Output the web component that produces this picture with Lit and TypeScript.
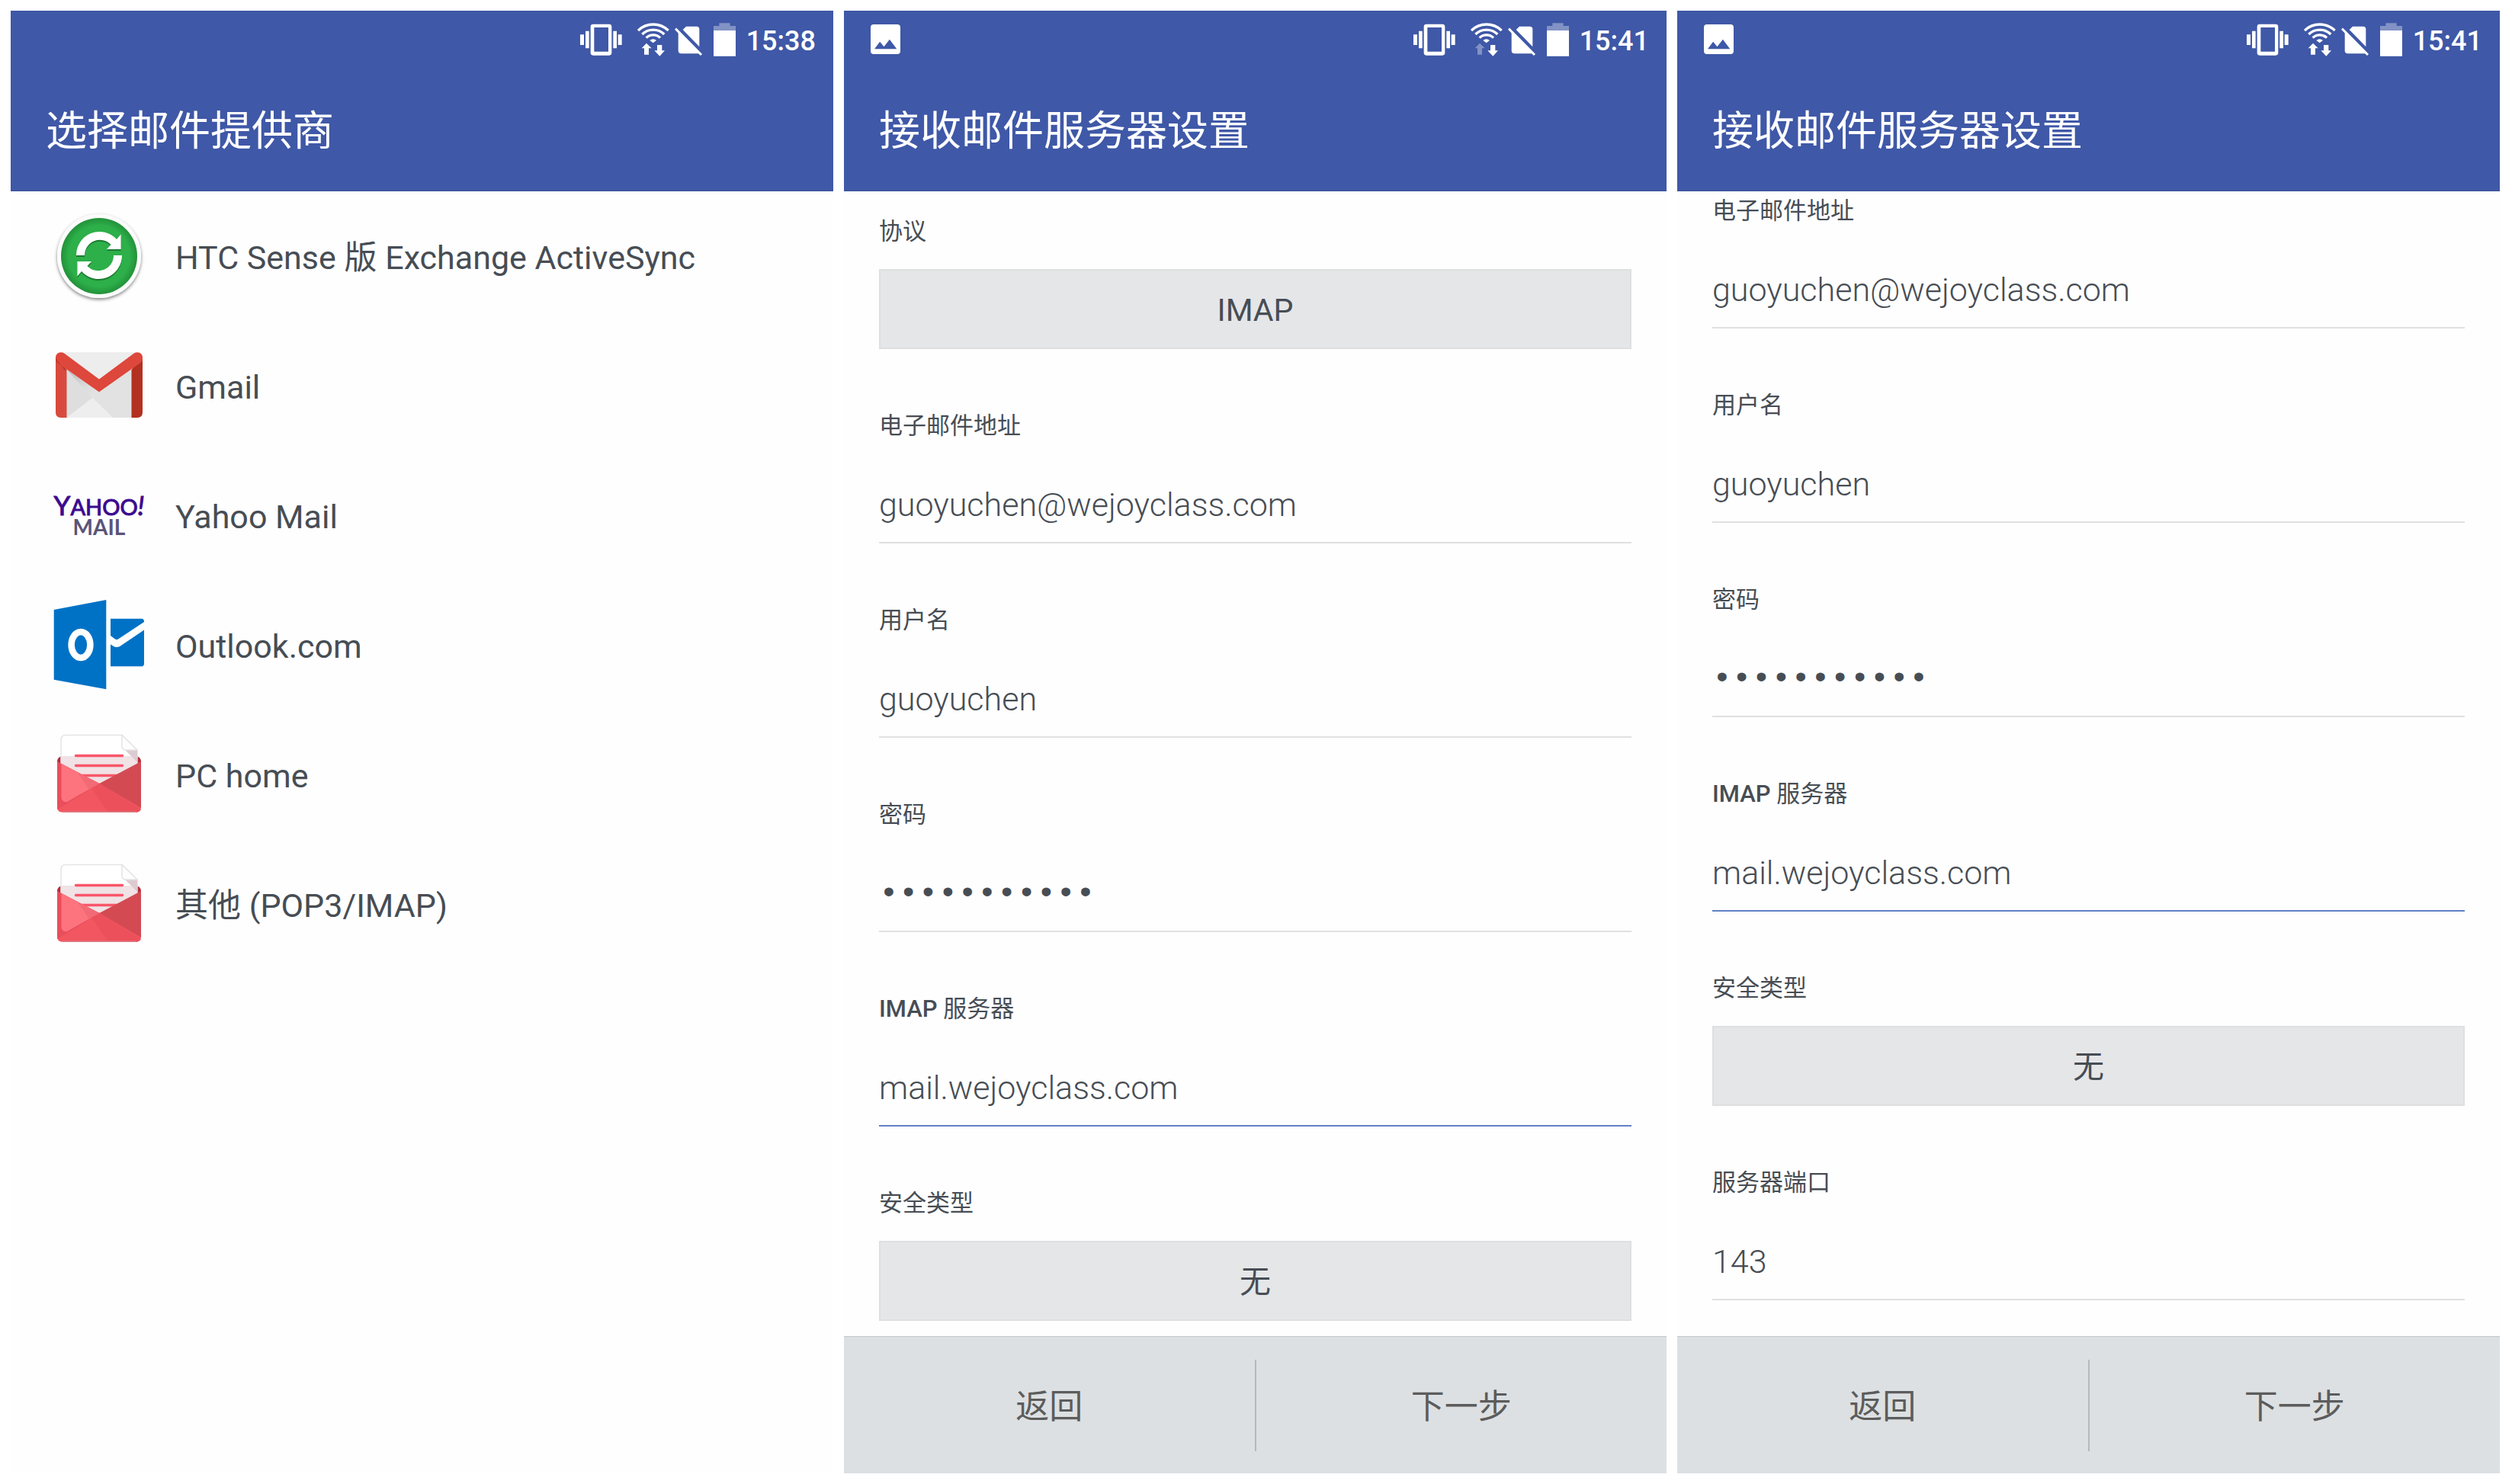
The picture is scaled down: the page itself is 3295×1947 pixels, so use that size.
import { LitElement, html, svg, css, nothing, type TemplateResult } from "lit";
import { customElement, property } from "lit/decorators.js";
import { classMap } from "lit/directives/class-map.js";

type Field =
  | { id: string; kind: "choice"; label: string; value: string }
  | { id: string; kind: "text" | "password"; label: string; value: string; active?: boolean };

interface Provider {
  name: string;
  icon: TemplateResult;
}

/* ---------- provider icons ---------- */

const syncIcon = html`<svg class="icon" viewBox="0 0 120 120" aria-hidden="true">
  <defs>
    <radialGradient id="sync-fill" cx="50%" cy="50%" r="50%">
      <stop offset="0.8" stop-color="#2daf49" />
      <stop offset="1" stop-color="#22913a" />
    </radialGradient>
    <filter id="sync-drop" x="-20%" y="-20%" width="140%" height="140%">
      <feDropShadow dx="0" dy="2" stdDeviation="2" flood-color="#000" flood-opacity="0.5" />
    </filter>
  </defs>
  <circle cx="60" cy="58" r="55" fill="#fbfbfb" filter="url(#sync-drop)" />
  <circle cx="60" cy="58" r="50" fill="url(#sync-fill)" />
  <g fill="#1d7a31" transform="translate(0 2)">
    <path d="M30 57A30.500 31 0 0 1 83 36L88.600 29.500V49H70L75.500 43A20 20 0 0 0 41 57Z" />
    <path transform="rotate(180 60 57)" d="M30 57A30.500 31 0 0 1 83 36L88.600 29.500V49H70L75.500 43A20 20 0 0 0 41 57Z" />
  </g>
  <g fill="#fff">
    <path d="M30 57A30.500 31 0 0 1 83 36L88.600 29.500V49H70L75.500 43A20 20 0 0 0 41 57Z" />
    <path transform="rotate(180 60 57)" d="M30 57A30.500 31 0 0 1 83 36L88.600 29.500V49H70L75.500 43A20 20 0 0 0 41 57Z" />
  </g>
</svg>`;

const gmailIcon = html`<svg class="icon" viewBox="0 0 120 120" aria-hidden="true">
  <defs>
    <linearGradient id="gm-shade" x1="0" y1="0" x2="1" y2="1">
      <stop offset="0" stop-color="#b9b9b9" />
      <stop offset="0.6" stop-color="#dcdcdc" />
      <stop offset="1" stop-color="#e6e6e6" />
    </linearGradient>
  </defs>
  <path d="M10 14.500H110L117 24V93Q117 100 110 100H10Q3 100 3 93V24Z" fill="#e4e4e4" />
  <path d="M14 14.500H106L60 50Z" fill="#ededed" />
  <path d="M17.500 37V100L51.500 73.700Z" fill="#dedede" />
  <path d="M17.500 37L60 66.300L102.500 37V100H78L51.500 73.700Z" fill="#e2e2e2" />
  <path d="M17.500 37L60 66.300L51.500 73.700Z" fill="url(#gm-shade)" />
  <path d="M17.500 100L51.500 73.700L78 100Z" fill="#eee" />
  <path d="M3 21V93Q3 100 10 100H17.500V37Z" fill="#d94a3e" />
  <path d="M117 21V93Q117 100 110 100H102.500V37Z" fill="#b23121" />
  <path d="M3 22Q3 14.300 10 14.300Q13 14.300 15.500 16.500L60 49.500L104.500 16.500Q107 14.300 110 14.300Q117 14.300 117 22Q117 26 113.500 28.500L60 66.300L6 28.500Q3 26 3 22Z" fill="#de473b" />
  <path d="M3 22Q3 26 6 28.500L17.500 37L15 38Z" fill="#b63a2f" />
</svg>`;

const yahooIcon = html`<svg class="icon" viewBox="0 0 120 120" aria-hidden="true">
  <text class="yahoo" x="60" y="58" font-size="35" text-anchor="middle">Y<tspan font-size="29">AHOO</tspan><tspan font-style="italic">!</tspan></text>
  <text class="yahoo-mail" x="60" y="84" font-size="28" text-anchor="middle">MAIL</text>
</svg>`;

const outlookIcon = html`<svg class="icon" viewBox="0 0 120 120" aria-hidden="true">
  <path d="M0.700 12L69.300 -1V116.300L0.700 103.700Z" fill="#0072c6" />
  <ellipse cx="36" cy="58" rx="12.400" ry="17" fill="none" stroke="#fff" stroke-width="8.500" />
  <path d="M75 23.700H117L119 26V28L85 50.500Q83 51.500 81 50.500L75 46Z" fill="#0072c6" />
  <path d="M75 57.500L80 60.500Q84 62 88 59.500L119 38.500V84L117 86.300H75Z" fill="#0072c6" />
</svg>`;

const mailIcon = html`<svg class="icon" viewBox="0 0 120 120" aria-hidden="true">
  <path d="M5 42Q5 34 13 34H107Q115 34 115 42V60H5Z" fill="#b32f3d" />
  <path d="M10 46V13Q10 6.500 16 6.500H90L110 26V46L60 72Z" fill="#fff" stroke="#e6e4e5" stroke-width="1.500" />
  <path d="M10.500 34H110V44L60.500 72L10.500 44Z" fill="#f0e2e5" />
  <path d="M94 26H110V42Z" fill="#dccbd0" />
  <path d="M90 6.500V21Q90 26 96 26H110Z" fill="#fdfdfd" stroke="#e6e4e5" stroke-width="1.500" />
  <g stroke="#f9566a" stroke-width="3.500" stroke-linecap="round">
    <path d="M29.500 33.500H90.500M29.500 46.500H90.500M29.500 59.500H90.500" />
  </g>
  <path d="M5 42L60.500 70L115 42V100.500Q115 107.700 108 107.700H12Q5 107.700 5 100.500Z" fill="#f25660" />
  <path d="M5 41L60.500 70L5 104Z" fill="#e84e5b" />
  <path d="M10.500 44L60.500 70L18 94Q11 95 10.500 88Z" fill="#fd737e" />
  <path d="M32 56L60.500 70L47 78Z" fill="#f26a75" />
  <path d="M60.500 70L115 104Q113 107.700 108 107.700H72L50 76Z" fill="#ec505b" />
  <path d="M115 41L60.500 70L115 102Z" fill="#d34a53" />
  <path d="M12 107.200H108" stroke="#d98088" stroke-width="1.500" />
</svg>`;

/* ---------- status icons ---------- */

const pictureIcon = html`<svg width="39" height="39" viewBox="1205 97 116 116" aria-hidden="true">
  <path fill="#fff" fill-rule="evenodd" d="M1217 97H1309Q1321 97 1321 109V201Q1321 213 1309 213H1217Q1205 213 1205 201V109Q1205 97 1217 97ZM1220 193H1307L1279 156L1257 184L1241 165Z" />
</svg>`;

const vibrateIcon = html`<svg width="68" height="44" viewBox="62 87 204 132" aria-hidden="true">
  <path fill="#fff" d="M62 133H77V174H62ZM83 119H97V187H83ZM192 119H206V187H192ZM211 133H226V174H211Z" />
  <path fill="#fff" fill-rule="evenodd" d="M113 92H176Q186 92 186 102V205Q186 215 176 215H113Q103 215 103 205V102Q103 92 113 92ZM117 105V200H173V105Z" />
</svg>`;

const wifiIcon = (uploading: boolean) => html`<svg width="42" height="44" viewBox="285 87 126 132" aria-hidden="true">
  <g fill="none" stroke="#fff" stroke-width="10">
    <path d="M288 117A86 86 0 0 1 407 117" />
    <path d="M304 132A62 62 0 0 1 391 132" />
    <path d="M320 146A39 39 0 0 1 375 146" />
  </g>
  <path fill="#fff" d="M334 156Q347 145 360 156L347 166Z" />
  ${svg`<path fill="#fff" opacity=${uploading ? 1 : 0.35} d="M321 167L341 187H330V212H312V187H302Z" />`}
  <path fill="#fff" d="M363 174H382V196H393L373 218L352 196H363Z" />
</svg>`;

const noSimIcon = html`<svg width="44" height="44" viewBox="432 87 132 132" aria-hidden="true">
  <path fill="#fff" d="M464 114L477 101H518Q529 101 529 112V181Z" />
  <path fill="#fff" d="M446 118L534 208H458Q446 208 446 196Z" />
  <path stroke="#fff" stroke-width="9" d="M435 110L537 213" />
</svg>`;

const batteryIcon = html`<svg width="29" height="44" viewBox="585 87 87 132" aria-hidden="true">
  <path fill="#fff" opacity="0.35" d="M607 88H650V99H672V117H585V99H607Z" />
  <path fill="#fff" d="M585 117H672V218H585Z" />
</svg>`;

/* ---------- shared header ---------- */

@customElement("phone-header")
class PhoneHeader extends LitElement {
  @property() heading = "";
  @property() time = "";
  @property({ type: Boolean }) picture = false;
  @property({ type: Boolean }) uploading = false;

  static styles = css`
    :host {
      display: block;
      box-sizing: border-box;
      height: 237px;
      background: #3f58a7;
      border-bottom: 1px solid #3a519a;
      color: #fff;
    }
    .status {
      display: flex;
      align-items: center;
      justify-content: space-between;
      box-sizing: border-box;
      height: 72px;
      padding: 3px 23px 0 35px;
    }
    .tray {
      display: flex;
      align-items: center;
      gap: 7px;
      margin-left: auto;
    }
    .clock {
      padding: 4px 0 0 7px;
      font-size: 36px;
      font-weight: 500;
      line-height: 40px;
    }
    h1 {
      margin: 0;
      padding: 47px 46px 0;
      font-size: 54px;
      font-weight: 400;
      line-height: 80px;
    }
    svg {
      display: block;
    }
  `;

  render() {
    return html`
      <div class="status">
        ${this.picture ? pictureIcon : nothing}
        <div class="tray">
          ${vibrateIcon} ${wifiIcon(this.uploading)} ${noSimIcon} ${batteryIcon}
          <time class="clock">${this.time}</time>
        </div>
      </div>
      <h1>${this.heading}</h1>
    `;
  }
}

/* ---------- provider list ---------- */

@customElement("provider-list")
class ProviderList extends LitElement {
  @property({ attribute: false }) providers: Provider[] = [];

  static styles = css`
    ul {
      margin: 0;
      padding: 2px 0 0;
      list-style: none;
    }
    button {
      display: flex;
      align-items: center;
      gap: 40px;
      width: 100%;
      height: 170px;
      padding: 0 56px;
      border: 0;
      background: none;
      color: #474d54;
      font: inherit;
      font-size: 43px;
      line-height: 50px;
      text-align: left;
    }
    .icon {
      flex: none;
      width: 120px;
      height: 120px;
      overflow: visible;
    }
    .yahoo {
      fill: #3c0a8f;
      stroke: #3c0a8f;
      font-family: Lato, sans-serif;
    }
    .yahoo-mail {
      fill: #5a5478;
      font-family: Lato, sans-serif;
      font-weight: 700;
    }
  `;

  render() {
    return html`<ul>
      ${this.providers.map((p) => html`<li><button type="button">${p.icon}<span>${p.name}</span></button></li>`)}
    </ul>`;
  }
}

/* ---------- server settings form ---------- */

@customElement("server-form")
class ServerForm extends LitElement {
  @property({ attribute: false }) fields: Field[] = [];
  @property({ type: Boolean, reflect: true }) scrolled = false;

  static styles = css`
    :host {
      display: flex;
      flex: 1;
      flex-direction: column;
    }
    form {
      display: flex;
      flex: 1;
      flex-direction: column;
    }
    .fields {
      display: flex;
      flex: 1;
      flex-direction: column;
      gap: 76px;
      padding: 28px 46px 20px;
    }
    :host([scrolled]) .fields {
      padding-top: 1px;
    }
    .field {
      display: flex;
      flex-direction: column;
      gap: 24px;
    }
    label {
      color: #474d54;
      font-size: 31px;
      line-height: 50px;
    }
    .latin {
      font-weight: 500;
    }
    input,
    .choice {
      box-sizing: border-box;
      width: 100%;
      height: 105px;
      margin: 0;
      border-radius: 0;
      color: #474d54;
      font: inherit;
      font-size: 43px;
      outline: none;
    }
    input {
      padding: 5px 0 0;
      border: 0;
      border-bottom: 2px solid #e0e0e1;
      background: none;
      font-weight: 300;
    }
    .masked {
      font-family: "Liberation Mono", monospace;
    }
    .active {
      border-bottom-color: #6080c6;
    }
    .choice {
      padding: 2px 0 0;
      border: 2px solid #dedfe0;
      background: #e5e6e8;
      font-size: 41px;
      line-height: 50px;
    }
    .actions {
      display: flex;
      align-items: center;
      box-sizing: border-box;
      height: 180px;
      border-top: 1px solid #c3c5c7;
      background: #dde0e2;
    }
    .actions button {
      flex: 1;
      height: 120px;
      padding: 4px 0 0;
      border: 0;
      background: none;
      color: #5c5c5c;
      font: inherit;
      font-size: 44px;
      line-height: 50px;
    }
    .actions .back {
      border-right: 2px solid #b6b8ba;
    }
  `;

  private control(f: Field) {
    if (f.kind === "choice") {
      return html`<button type="button" class="choice" id=${f.id} aria-haspopup="listbox">${f.value}</button>`;
    }
    return html`<input
      id=${f.id}
      type=${f.kind}
      class=${classMap({ active: !!f.active, masked: f.kind === "password" })}
      autocomplete="off"
      spellcheck="false"
      .value=${f.value}
    />`;
  }

  private labelText(text: string) {
    const m = /^([A-Z]+)(.*)$/.exec(text);
    return m ? html`<span class="latin">${m[1]}</span>${m[2]}` : text;
  }

  render() {
    return html`<form @submit=${(e: Event) => e.preventDefault()}>
      <div class="fields">
        ${this.fields.map(
          (f) => html`<div class="field">
            <label for=${f.id}>${this.labelText(f.label)}</label>
            ${this.control(f)}
          </div>`
        )}
      </div>
      <div class="actions">
        <button type="button" class="back">返回</button>
        <button type="submit">下一步</button>
      </div>
    </form>`;
  }
}

/* ---------- page ---------- */

const providers: Provider[] = [
  { name: "HTC Sense 版 Exchange ActiveSync", icon: syncIcon },
  { name: "Gmail", icon: gmailIcon },
  { name: "Yahoo Mail", icon: yahooIcon },
  { name: "Outlook.com", icon: outlookIcon },
  { name: "PC home", icon: mailIcon },
  { name: "其他 (POP3/IMAP)", icon: mailIcon },
];

const settings: Field[] = [
  { id: "protocol", kind: "choice", label: "协议", value: "IMAP" },
  { id: "email", kind: "text", label: "电子邮件地址", value: "guoyuchen@wejoyclass.com" },
  { id: "user", kind: "text", label: "用户名", value: "guoyuchen" },
  { id: "password", kind: "password", label: "密码", value: "wejoyclass1" },
  { id: "server", kind: "text", label: "IMAP 服务器", value: "mail.wejoyclass.com", active: true },
  { id: "security", kind: "choice", label: "安全类型", value: "无" },
  { id: "port", kind: "text", label: "服务器端口", value: "143" },
];

@customElement("app-root")
class AppRoot extends LitElement {
  static styles = css`
    :host {
      display: grid;
      grid-template-columns: repeat(3, minmax(0, 1fr));
      gap: 14px;
      box-sizing: border-box;
      min-height: 100vh;
      padding: 14px 16px 14px 14px;
      background: #fff;
      font-family: Roboto, "Noto Sans CJK SC", sans-serif;
    }
    .screen {
      display: flex;
      flex-direction: column;
      background: #fefefe;
    }
  `;

  render() {
    return html`
      <section class="screen">
        <phone-header heading="选择邮件提供商" time="15:38" uploading></phone-header>
        <provider-list .providers=${providers}></provider-list>
      </section>
      <section class="screen">
        <phone-header heading="接收邮件服务器设置" time="15:41" picture></phone-header>
        <server-form .fields=${settings.slice(0, 6)}></server-form>
      </section>
      <section class="screen">
        <phone-header heading="接收邮件服务器设置" time="15:41" picture uploading></phone-header>
        <server-form .fields=${settings.slice(1)} scrolled></server-form>
      </section>
    `;
  }
}
